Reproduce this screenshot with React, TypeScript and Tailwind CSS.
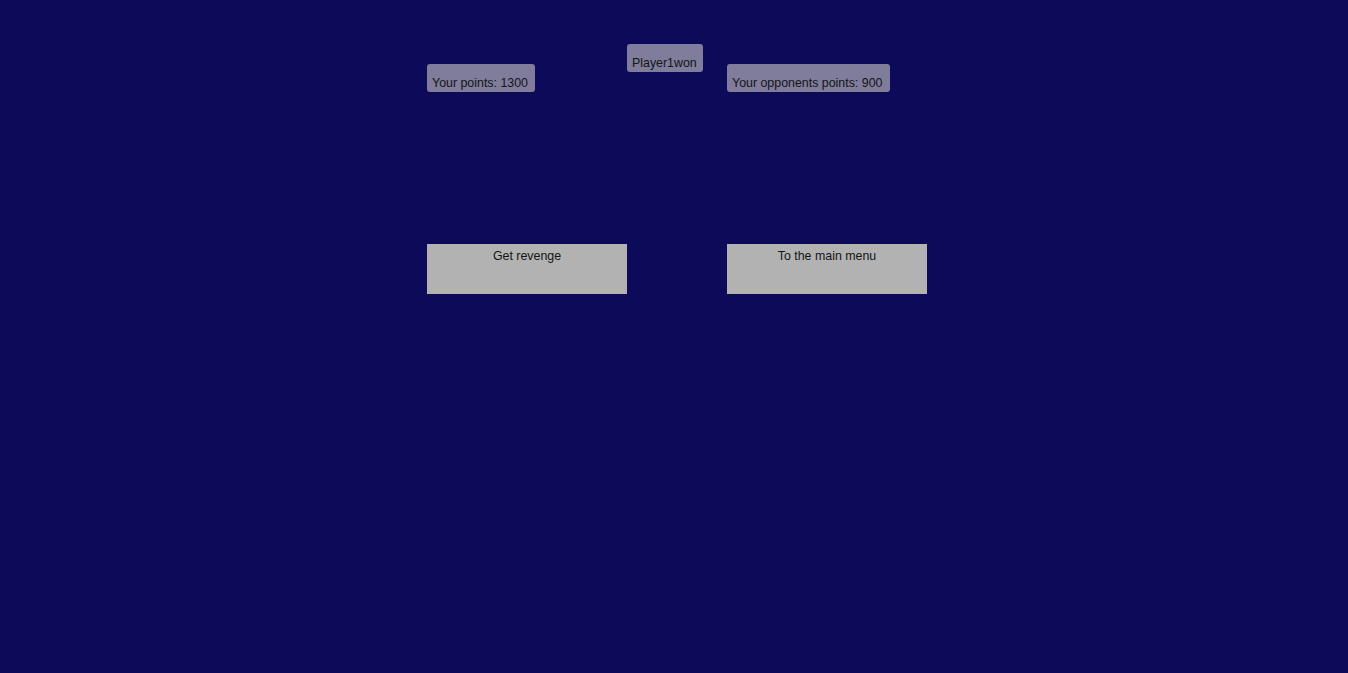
const label =
  "h-[28px] rounded-[3px] bg-[#7f7c9c] px-[5px] pb-[2px] flex items-end text-[12.4px] leading-[14px] text-[#151515] whitespace-nowrap";

const button =
  "h-[50px] w-[200px] bg-[#b2b2b2] pt-[5px] flex items-start justify-center text-[12.4px] leading-[14px] text-[#151515]";

export default function App() {
  return (
    <div
      className="min-h-screen w-full bg-[#0e0a5a] pt-[44px] pl-[427px]"
      style={{ fontFamily: '"Liberation Sans", Arial, sans-serif' }}
    >
      <div className="grid grid-cols-[200px_100px_200px] items-start">
        <div className="mt-[20px]">
          <div className={`${label} w-[108px]`}>Your points: 1300</div>
        </div>
        <div>
          <div className={`${label} w-[76px]`}>Player1won</div>
        </div>
        <div className="mt-[20px]">
          <div className={`${label} w-[163px]`}>Your opponents points: 900</div>
        </div>
      </div>

      <div className="mt-[152px] flex gap-[100px]">
        <button type="button" className={button}>
          Get revenge
        </button>
        <button type="button" className={button}>
          To the main menu
        </button>
      </div>
    </div>
  );
}
